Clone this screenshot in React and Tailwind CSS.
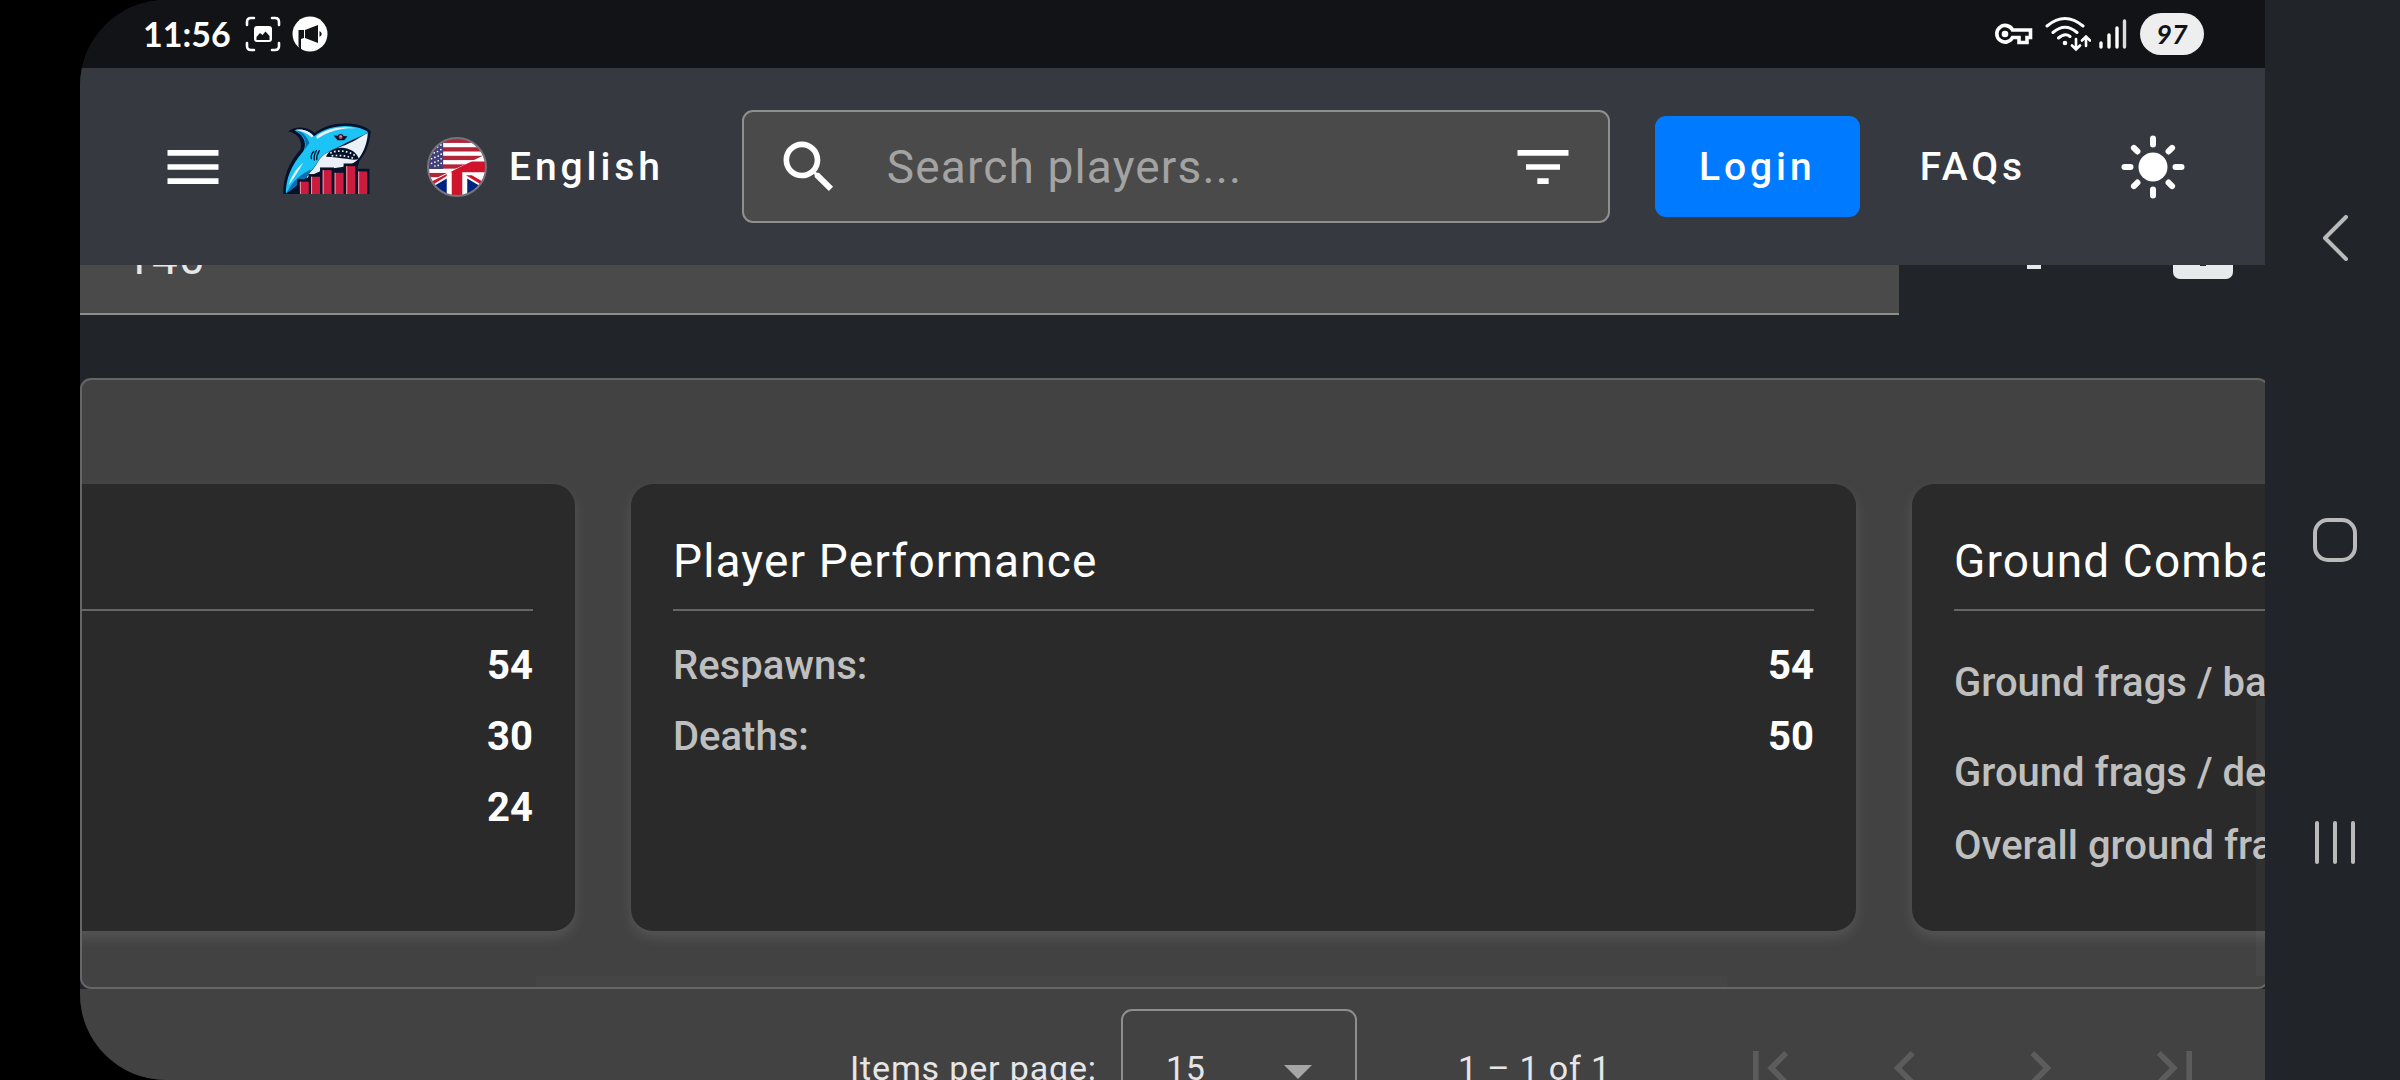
const ICONS = {
  menu: "M3 18h18v-2H3v2zm0-5h18v-2H3v2zm0-7v2h18V6H3z",
  search:
    "M15.5 14h-.79l-.28-.27C15.41 12.59 16 11.11 16 9.5 16 5.91 13.09 3 9.5 3S3 5.91 3 9.5 5.91 16 9.5 16c1.61 0 3.09-.59 4.23-1.57l.27.28v.79l5 4.99L20.49 19l-4.99-5zm-6 0C7.01 14 5 11.99 5 9.5S7.01 5 9.5 5 14 7.01 14 9.5 11.99 14 9.5 14z",
  filter: "M10 18h4v-2h-4v2zM3 6v2h18V6H3zm3 7h12v-2H6v2z",
  first: "M18.41 16.59L13.82 12l4.59-4.59L17 6l-6 6 6 6zM6 6h2v12H6z",
  prev: "M15.41 7.41L14 6l-6 6 6 6 1.41-1.41L10.83 12z",
  next: "M10 6L8.59 7.41 13.17 12l-4.58 4.59L10 18l6-6z",
  last: "M5.59 7.41L10.18 12l-4.59 4.59L7 18l6-6-6-6zM16 6h2v12h-2z",
};

function MatIcon({ name }) {
  return (
    <svg viewBox="0 0 24 24" className="size-[68px] shrink-0" fill="currentColor" aria-hidden="true">
      <path d={ICONS[name]} />
    </svg>
  );
}

function SharkLogo() {
  const bars = [
    [88, 215],
    [122, 200],
    [157, 180],
    [193, 188],
    [228, 168],
    [264, 184],
  ];
  return (
    <svg viewBox="38 38 264 214" className="mb-4 h-[71px] w-[88px] shrink-0" role="img" aria-label="Shark logo">
      <path
        fill="#05122b"
        d="M38 252C38 205 52 160 90 118C95 98 90 72 53 63C72 48 108 46 133 68C165 44 205 36 250 41C275 45 292 52 302 63C298 105 286 130 268 152L262 172L180 252Z"
      />
      <path
        fill="#1cc3f5"
        d="M46 250C46 208 60 168 98 124C110 104 104 76 72 60C95 54 118 62 131 78C165 52 210 42 255 50C275 54 288 60 294 66C270 82 240 90 215 105C185 120 160 128 145 150C130 175 118 185 105 203C85 222 68 235 46 250Z"
      />
      <path fill="#0b6fb4" d="M101 120C112 100 102 74 76 60C92 62 108 74 117 98Z" />
      <path fill="#0b6fb4" d="M48 250C62 222 78 198 122 178C116 192 100 212 78 228Z" />
      <path fill="#e9f0f7" d="M74 59C95 54 118 62 129 77L124 82C110 68 96 62 74 59ZM138 78C170 54 215 46 258 54C225 52 180 58 140 86Z" />
      <path fill="#e9f0f7" d="M54 226C62 200 75 178 98 158C84 184 70 204 54 226Z" />
      <path
        fill="#e9f0f7"
        d="M293 68C291 100 280 128 263 148C250 160 235 168 205 172C160 176 130 190 107 205C118 184 132 176 142 156C158 128 185 120 215 108C245 98 270 80 293 68Z"
      />
      <path fill="#05122b" d="M167 140C175 118 200 110 222 113C245 116 262 130 266 146C250 154 225 142 167 140Z" />
      <path
        fill="none"
        stroke="#e9f0f7"
        strokeWidth="5"
        strokeDasharray="5 7"
        d="M180 129C200 119 230 120 255 136M184 137C210 134 235 138 250 145"
      />
      <path fill="#05122b" d="M190 76L232 78L222 90H202Z" />
      <circle cx="211" cy="80" r="9" fill="#05122b" />
      <circle cx="211" cy="80" r="6" fill="#d8475f" />
      <circle cx="212" cy="78" r="2" fill="#f6d5da" />
      <path
        fill="none"
        stroke="#05122b"
        strokeWidth="4"
        strokeLinecap="round"
        d="M130 124Q120 134 123 145M138 121Q129 136 132 150M147 121Q138 136 139 148"
      />
      {bars.map(([x, y]) => (
        <rect key={x} x={x - 8} y={y - 8} width="42" height="84" fill="#05122b" />
      ))}
      {bars.map(([x, y]) => (
        <g key={x}>
          <rect x={x} y={y} width="27" height="84" fill="#cb1b3e" />
          <rect x={x} y={y} width="3" height="84" fill="#eda3b1" />
        </g>
      ))}
      <path fill="#05122b" d="M86 215L88 252H60Z" />
    </svg>
  );
}

function FlagIcon() {
  const stripes = [0, 1, 2, 3, 4, 5, 6];
  const stars = [
    [22, 20], [32, 16], [12, 38], [22, 34], [32, 30], [42, 24],
    [12, 52], [22, 48], [32, 44], [42, 38], [14, 66], [24, 62], [34, 58], [43, 52],
    [14, 80], [24, 76], [34, 72], [43, 66], [24, 88], [34, 86], [43, 80],
  ];
  return (
    <svg viewBox="0 0 182 182" className="size-[60px] shrink-0" aria-hidden="true">
      <defs>
        <clipPath id="flag-round">
          <circle cx="91" cy="91" r="87" />
        </clipPath>
      </defs>
      <g clipPath="url(#flag-round)">
        <rect width="182" height="182" fill="#fff" />
        {stripes.map((i) => (
          <rect key={i} y={5 + i * 26} width="182" height="13" fill="#b22437" />
        ))}
        <rect width="49" height="97" fill="#41407a" />
        {stars.map(([x, y]) => (
          <circle key={`${x}-${y}`} cx={x} cy={y} r="2.6" fill="#fff" />
        ))}
        <path fill="#fff" d="M0 138L182 51V182H0Z" />
        <path fill="#cf142b" d="M70 107L112 85L136 74H182V107H107V182H75V107Z" />
        <path fill="#cf142b" d="M8 138L60 112V118L14 147Z" />
        <path fill="#cf142b" d="M118 116H136L178 140L170 148Z" />
        <path fill="#00247d" d="M16 152L60 126V182H30Z" />
        <path fill="#00247d" d="M122 126L166 152L150 182H122Z" />
      </g>
      <circle cx="91" cy="91" r="88" fill="none" stroke="#77747c" strokeWidth="6" />
    </svg>
  );
}

function SunIcon() {
  const angles = [0, 45, 90, 135, 180, 225, 270, 315];
  return (
    <svg viewBox="-32 -32 64 64" className="size-16" aria-hidden="true">
      <circle r="14.5" fill="#fff" />
      {angles.map((a) => (
        <line
          key={a}
          y1={a % 90 ? -22 : -22.5}
          y2={a % 90 ? -27 : -28.5}
          stroke="#fff"
          strokeWidth="6"
          strokeLinecap="round"
          transform={`rotate(${a})`}
        />
      ))}
    </svg>
  );
}

function StatusBar() {
  return (
    <div className="flex h-[68px] shrink-0 items-center bg-[#121317] pr-[61px] pl-[63px] text-white">
      <span className="w-[90px] font-[Lato,sans-serif] text-[34px] leading-[44px] font-bold">11:56</span>
      <svg viewBox="0 0 36 36" className="ml-[12px] size-9" fill="none" stroke="#fff" strokeWidth="2.6" strokeLinecap="round" aria-hidden="true">
        <path d="M2 9V6Q2 2 6 2H9M27 2H30Q34 2 34 6V9M34 27V30Q34 34 30 34H27M9 34H6Q2 34 2 30V27" />
        <rect x="9" y="10" width="18" height="16" rx="3" fill="#fff" stroke="none" />
        <path d="M11.500 24V21L15 17L17.500 19L20.500 15.500L24.500 20V24Z" fill="#121317" stroke="none" />
      </svg>
      <svg viewBox="0 0 36 36" className="ml-[11px] size-9" aria-hidden="true">
        <circle cx="18" cy="18" r="17.500" fill="#fff" />
        <path d="M6.500 14H12V22L9 23V35L6.500 30Z" fill="#121317" />
        <path d="M13 14L26 9V27L13 22Z" fill="#121317" />
        <path d="M27.500 15Q32 18 27.500 21Z" fill="#121317" />
      </svg>
      <div className="ml-auto flex items-center">
        <svg viewBox="0 0 38 22" className="h-[22px] w-[38px]" fill="none" stroke="#fff" strokeWidth="3.600" aria-hidden="true">
          <path d="M17.500 7H35.500V14.500H32V19.500H24V14.500H17.500A8.300 8.300 0 1 1 17.500 7Z" />
          <circle cx="10" cy="11" r="3.300" fill="#fff" stroke="none" />
        </svg>
        <svg viewBox="0 0 46 36" className="ml-3 h-9 w-[46px]" fill="none" stroke="#fff" strokeWidth="3" strokeLinecap="round" aria-hidden="true">
          <path d="M2 10Q20 -5 38 10M8 16.500Q20 6 32 16.500M13.500 22Q20 16.500 25 20.500" />
          <circle cx="20" cy="27" r="2.300" fill="#fff" stroke="none" />
          <path d="M31 23V33M27 29.500L31 33.500L35 29.500M41 30V21M37 24.500L41 20.500L45 24.500" strokeWidth="2.600" />
        </svg>
        <svg viewBox="0 0 28 32" className="ml-2 h-8 w-7" stroke="#fff" strokeWidth="3.400" strokeLinecap="round" aria-hidden="true">
          <path d="M2 25V29M10 17V29M18 10V29" />
          <path d="M25.500 3V29" stroke="#dcdcdc" />
        </svg>
        <span className="ml-[13px] flex h-[42px] w-16 items-center justify-center rounded-full bg-[#eeeeee] font-[Lato,sans-serif] text-[27px] leading-8 font-bold text-[#121317] italic">
          97
        </span>
      </div>
    </div>
  );
}

function Header() {
  return (
    <header className="flex h-[197px] shrink-0 items-center bg-[#363940] pr-[80px] pl-[79px] text-[39px] leading-[56px] font-medium text-white">
      <button type="button" aria-label="Menu">
        <MatIcon name="menu" />
      </button>
      <a href="#home" className="ml-[56px] shrink-0" aria-label="Home">
        <SharkLogo />
      </a>
      <button type="button" className="ml-[56px] flex items-center gap-[22px] tracking-widest">
        <FlagIcon />
        English
      </button>
      <form className="ml-[78px] flex h-[113px] flex-1 items-center rounded-[11px] border-2 border-[#8f8f8f] bg-[#4a4a4a] px-[31px]">
        <MatIcon name="search" />
        <input
          type="text"
          aria-label="Search players"
          placeholder="Search players..."
          className="ml-[44px] min-w-0 flex-1 bg-transparent text-[46px] leading-[68px] font-normal tracking-wide outline-none placeholder:text-[#a3a3a3]"
        />
        <button type="button" aria-label="Filter">
          <MatIcon name="filter" />
        </button>
      </form>
      <button type="button" className="ml-[45px] h-[101px] w-[205px] rounded-[11px] bg-[#007bff] tracking-widest">
        Login
      </button>
      <a href="#faqs" className="ml-[60px] tracking-widest">
        FAQs
      </a>
      <button type="button" className="ml-[95px]" aria-label="Switch theme">
        <SunIcon />
      </button>
    </header>
  );
}

function FilterRow() {
  return (
    <div className="flex h-[50px] shrink-0 items-end overflow-hidden">
      <input
        type="text"
        aria-label="Filter value"
        defaultValue="140"
        className="h-[110px] min-w-0 flex-1 border-b-2 border-[#8e8e8e] bg-[#4a4a4a] pt-[19px] pb-[21px] pl-[45px] text-[46px] leading-[68px] tracking-wide text-[#e6e6e6] outline-none"
      />
      <button type="button" aria-label="Add" className="mb-[46px] ml-[108px]">
        <svg viewBox="0 0 54 54" className="size-[54px]" fill="#e6eaea">
          <path d="M20 0H34V20H54V34H34V54H20V34H0V20H20Z" />
        </svg>
      </button>
      <button type="button" aria-label="Open" className="mr-[32px] mb-[36px] ml-[112px]">
        <svg viewBox="0 0 60 60" className="size-[60px]">
          <rect width="60" height="60" rx="7" fill="#e6eaea" />
          <rect x="27" y="14" width="6" height="33" fill="#212429" />
        </svg>
      </button>
    </div>
  );
}

function StatCard({ title, rows, tall }) {
  return (
    <section className="h-[447px] w-[1225px] shrink-0 rounded-[22px] bg-[#2a2a2a] px-[42px] pt-[43px] shadow-[0_6px_14px_rgba(255,255,255,0.11)]">
      <h2 className="h-[84px] border-b-2 border-[#666666] text-[46px] leading-[68px] tracking-wide whitespace-nowrap text-white">
        {title}
      </h2>
      <dl className="mt-[19px] text-[40px] leading-[56px]">
        {rows.map(([label, value], i) => (
          <div
            key={i}
            className={`flex items-center justify-between ${tall && i === 0 ? "h-[106px]" : tall && i === 1 ? "h-[74px]" : "h-[71px]"}`}
          >
            <dt className="font-medium whitespace-nowrap text-[#bfbfbf]">{label}</dt>
            <dd className="font-bold text-white">{value}</dd>
          </div>
        ))}
      </dl>
    </section>
  );
}

function Paginator() {
  return (
    <footer className="flex h-[158px] shrink-0 items-center justify-end bg-[#424242] pr-[23px] text-[34px] leading-[48px] tracking-wide text-[#e6e6e6]">
      <label htmlFor="page-size">Items per page:</label>
      <div className="relative ml-[24px] h-[118px] w-[236px]">
        <select
          id="page-size"
          defaultValue="15"
          className="size-full appearance-none rounded-[11px] border-2 border-[#8e8e8e] bg-[#424242] pl-[43px] tracking-wide"
        >
          <option>15</option>
        </select>
        <svg viewBox="0 0 28 14" className="pointer-events-none absolute top-[56px] right-[45px] h-[14px] w-7" fill="#a6a6a6" aria-hidden="true">
          <path d="M0 0H28L14 14Z" />
        </svg>
      </div>
      <span className="mr-[91px] ml-[101px]">1 – 1 of 1</span>
      {[
        ["first", "First page"],
        ["prev", "Previous page"],
        ["next", "Next page"],
        ["last", "Last page"],
      ].map(([icon, label]) => (
        <button key={icon} type="button" disabled aria-label={label} className="flex size-[135px] items-center justify-center text-[#5c5c5c]">
          <MatIcon name={icon} />
        </button>
      ))}
    </footer>
  );
}

function SystemNav() {
  return (
    <nav className="flex w-[135px] shrink-0 flex-col items-center justify-between bg-[#212429] py-[215px] pl-[4px] text-[#bababa]">
      <button type="button" aria-label="Back">
        <svg viewBox="0 0 46 46" className="size-[46px]" fill="none" stroke="currentColor" strokeWidth="4" strokeLinecap="round" strokeLinejoin="round">
          <path d="M34 2L13 23L34 44" />
        </svg>
      </button>
      <button type="button" aria-label="Home screen">
        <svg viewBox="0 0 46 46" className="size-[46px]" fill="none" stroke="currentColor" strokeWidth="4">
          <rect x="3" y="3" width="40" height="40" rx="13" />
        </svg>
      </button>
      <button type="button" aria-label="Recent apps">
        <svg viewBox="0 0 46 46" className="size-[46px]" fill="none" stroke="currentColor" strokeWidth="4" strokeLinecap="round">
          <path d="M5 4V43M23 4V43M41 4V43" />
        </svg>
      </button>
    </nav>
  );
}

export default function App() {
  return (
    <div className="flex h-screen overflow-hidden bg-black pl-20 font-[Roboto,sans-serif]">
      <main className="flex min-w-0 flex-1 flex-col overflow-hidden rounded-l-[86px] bg-[#212429]">
        <StatusBar />
        <Header />
        <FilterRow />
        <div className="relative mt-[63px] -mr-1 shrink-0 overflow-hidden rounded-[11px] border-2 border-[#666666] bg-[#424242] pt-[104px] pb-[56px]">
          <div className="-ml-[732px] flex gap-14">
            <StatCard
              rows={[
                ["", "54"],
                ["", "30"],
                ["", "24"],
              ]}
            />
            <StatCard
              title="Player Performance"
              rows={[
                ["Respawns:", "54"],
                ["Deaths:", "50"],
              ]}
            />
            <StatCard
              tall
              title="Ground Combat"
              rows={[
                ["Ground frags / battle:", ""],
                ["Ground frags / death:", ""],
                ["Overall ground frags:", ""],
              ]}
            />
          </div>
          <div className="absolute bottom-0 left-[454px] h-[11px] w-[1191px] bg-white/2" />
          <div className="absolute right-[2px] bottom-[11px] h-[278px] w-[9px] bg-white/3" />
        </div>
        <Paginator />
      </main>
      <SystemNav />
    </div>
  );
}
